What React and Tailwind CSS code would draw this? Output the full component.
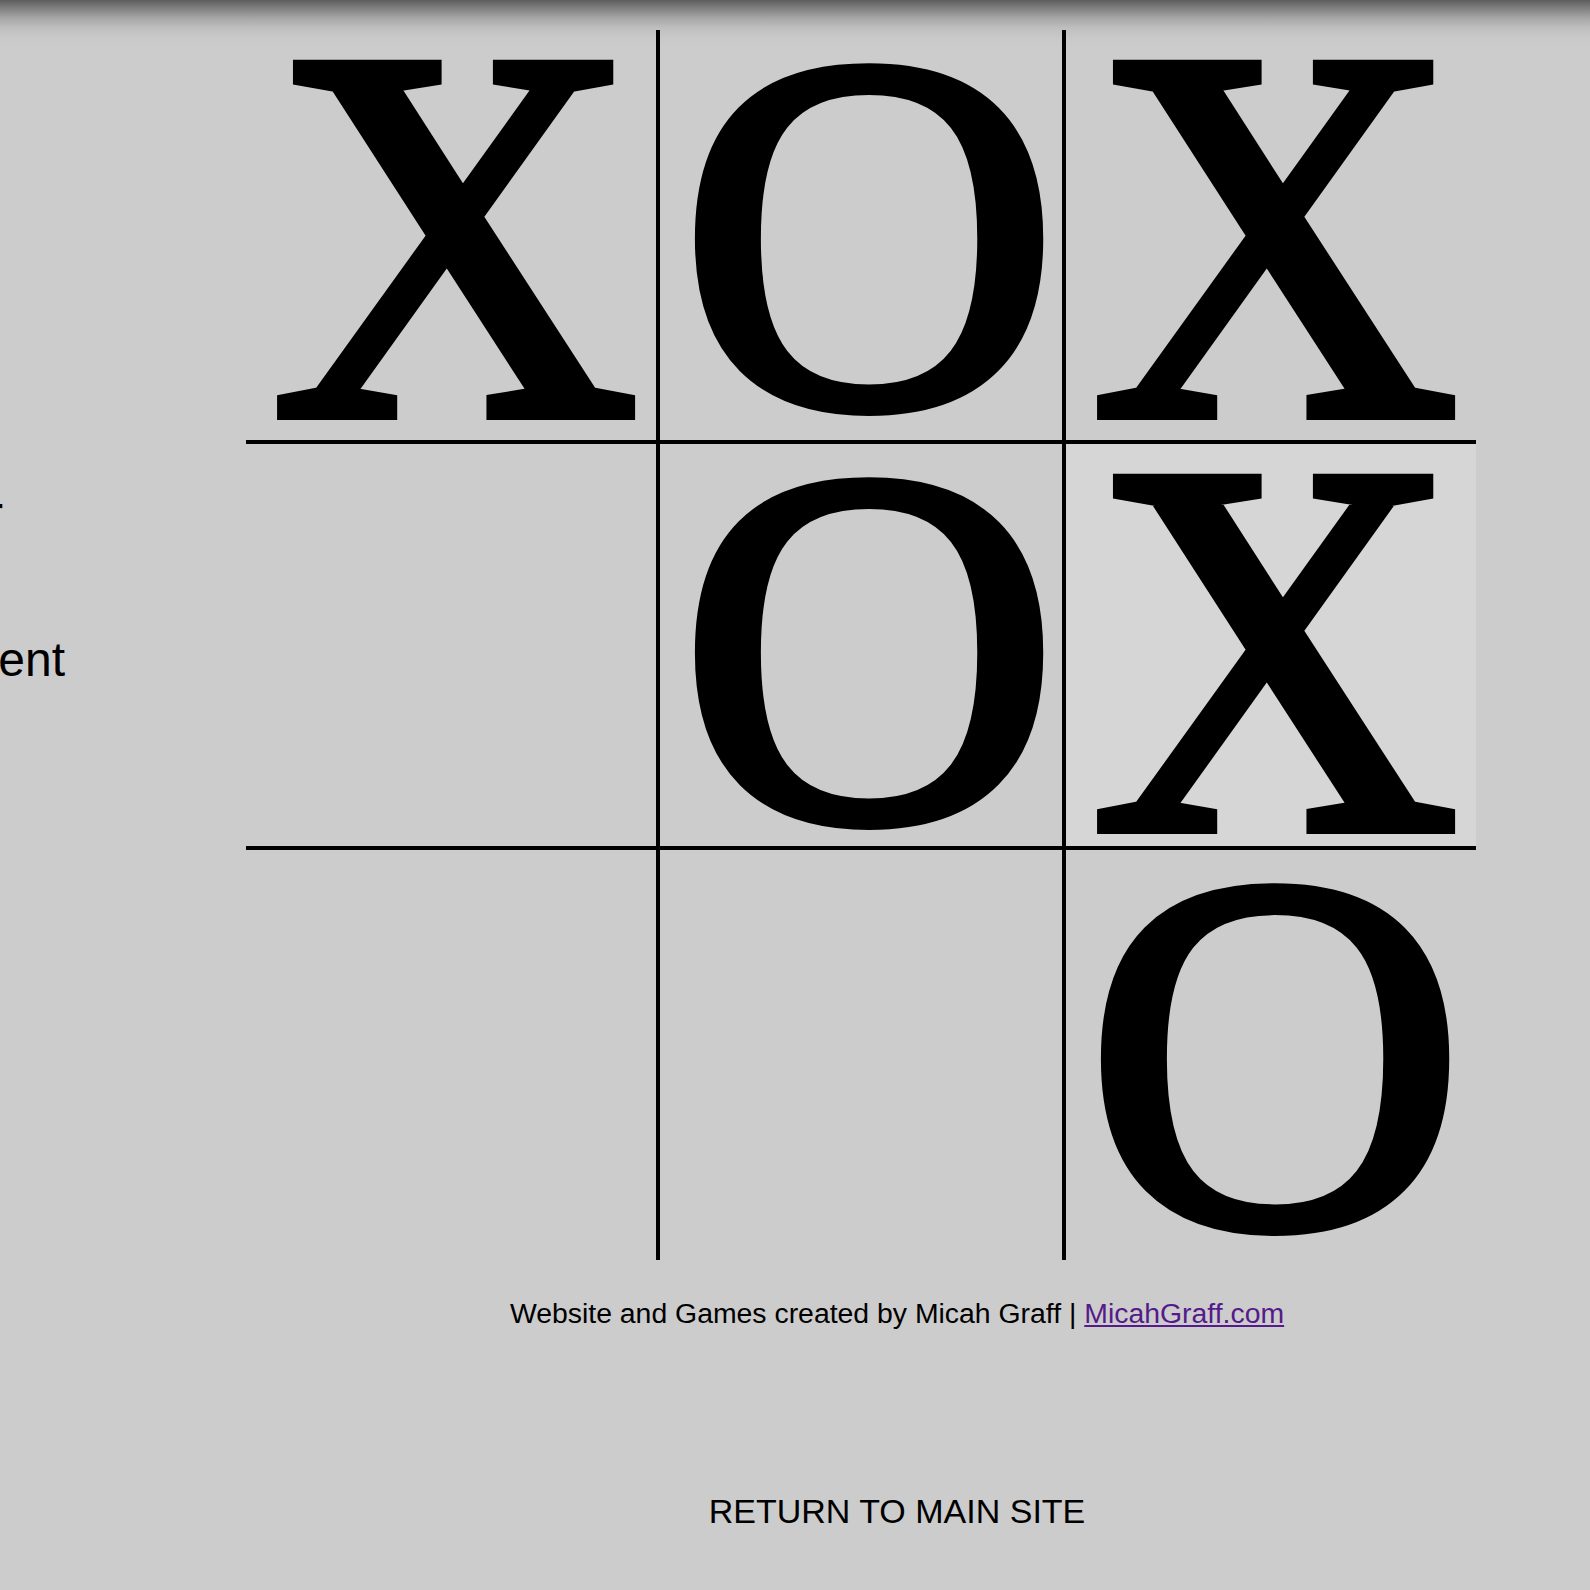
const board = [
  ['X', 'O', 'X'],
  ['', 'O', 'X'],
  ['', '', 'O'],
];

function Mark({ value }) {
  if (value === 'X') {
    return (
      <span className="inline-block font-['Liberation_Serif',serif] text-[532px] leading-[409px] scale-x-[0.955] [-webkit-text-stroke:12px_black]">
        X
      </span>
    );
  }
  if (value === 'O') {
    return (
      <span className="inline-block font-['Liberation_Serif',serif] text-[507px] leading-[409px] scale-x-[1.035] [-webkit-text-stroke:12px_black]">
        O
      </span>
    );
  }
  return null;
}

// marks sit at the top-left of each cell; middle row / column carry the grid lines
function cellClass(r, c) {
  const classes = ['flex items-start justify-start h-[410px] w-[410px] border-black'];
  if (c === 1 && r === 1) classes.push('border-4');
  else if (c === 1) classes.push('border-x-4');
  else if (r === 1) classes.push('border-y-4');
  if (r === 1 && c === 2) classes.push('bg-[#d6d6d6]');
  return classes.join(' ');
}

export default function App() {
  return (
    <div className="min-h-screen w-full overflow-hidden flex bg-[#cccccc] bg-[linear-gradient(to_bottom,#5d5d5d_0px,#7f7f7f_8px,#a6a6a6_18px,#bfbfbf_28px,#c9c9c9_38px,#cccccc_48px)] font-['Liberation_Sans',Arial,sans-serif] text-black">
      {/* Side panel, mostly scrolled off to the left */}
      <div className="w-[204px] shrink-0 flex flex-col pt-[490px] text-[48px] leading-[48px]">
        <div className="flex justify-end pr-[201px] whitespace-nowrap">Two Player</div>
        <div className="flex justify-end pr-[139px] whitespace-nowrap mt-[98px]">Computer Opponent</div>
      </div>

      {/* Main column */}
      <div className="flex-1 flex flex-col">
        <div className="ml-[42px] mt-[30px] grid grid-cols-[410px_410px_410px] w-[1230px]">
          {board.map((row, r) =>
            row.map((v, c) => (
              <div key={`${r}-${c}`} className={cellClass(r, c)}>
                <div className="w-[410px] shrink-0 pl-[9px] flex justify-center">
                  <Mark value={v} />
                </div>
              </div>
            ))
          )}
        </div>

        <p className="mt-[32px] text-center text-[28.4px]">
          Website and Games created by Micah Graff |{' '}
          <a href="#" className="text-[#551a8b] underline">MicahGraff.com</a>
        </p>

        <div className="mt-[151px] text-center">
          <a href="#" className="text-[34px]">RETURN TO MAIN SITE</a>
        </div>
      </div>
    </div>
  );
}
